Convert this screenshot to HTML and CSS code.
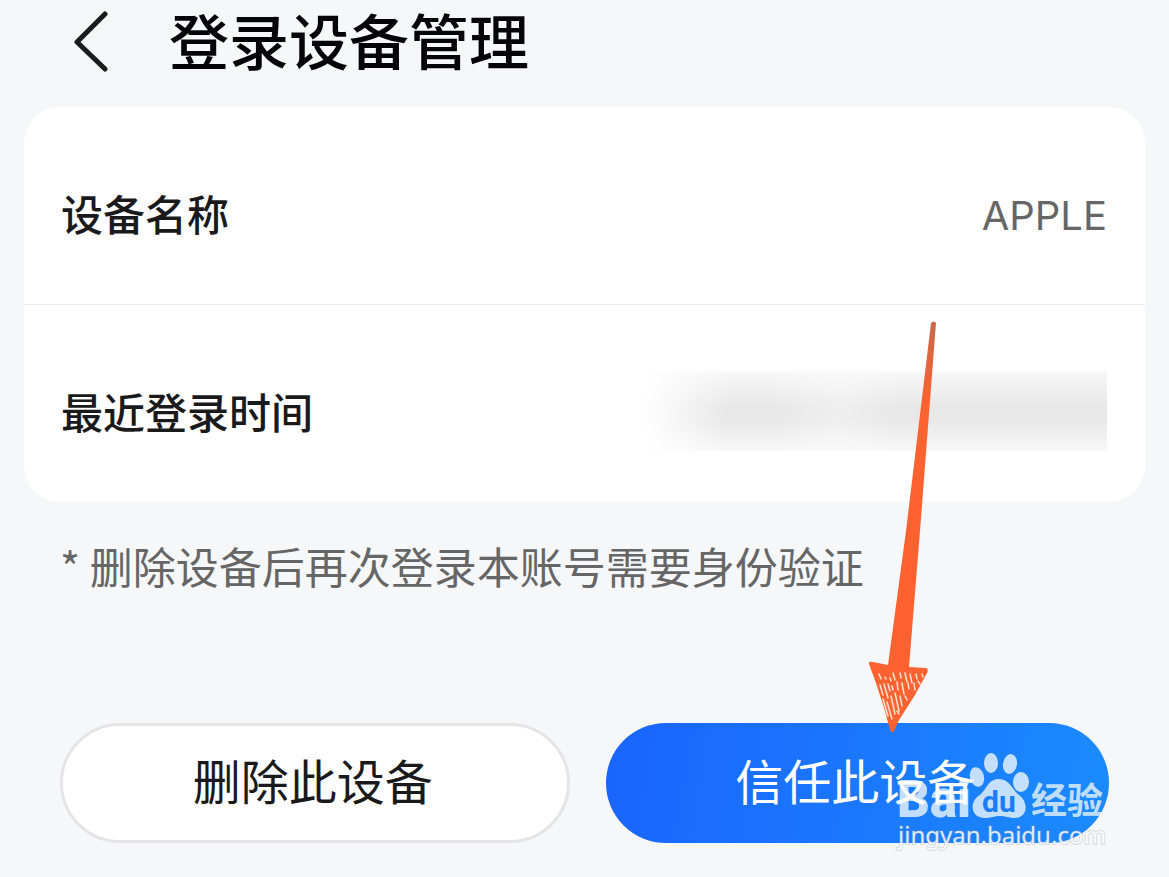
FILE: index.html
```html
<!DOCTYPE html>
<html lang="zh-CN">
<head>
<meta charset="utf-8">
<meta name="viewport" content="width=device-width, initial-scale=1">
<title>登录设备管理</title>
<link rel="stylesheet" href="styles.css">
</head>
<body>
<div class="page">
  <header class="header">
    <button class="back" type="button" aria-label="返回">
      <svg width="40" height="66" viewBox="0 0 40 66" fill="none" stroke="#1b1b1d" stroke-width="5" stroke-linecap="round" stroke-linejoin="round"><path d="M35 8 7 36 35 63"/></svg>
    </button>
    <h1 class="title">登录设备管理</h1>
  </header>
  <main>
    <dl class="card">
      <div class="row">
        <dt class="label">设备名称</dt>
        <dd class="value">APPLE</dd>
      </div>
      <div class="row">
        <dt class="label">最近登录时间</dt>
        <dd class="value masked" aria-label="已隐藏"></dd>
      </div>
    </dl>
    <p class="note">* 删除设备后再次登录本账号需要身份验证</p>
    <div class="actions">
      <button class="btn btn-plain" type="button">删除此设备</button>
      <button class="btn btn-primary" type="button">信任此设备</button>
    </div>
  </main>

  <svg class="arrow" width="72" height="416" viewBox="0 0 72 416" aria-hidden="true">
    <defs><linearGradient id="shaft" x1="0" y1="0" x2="0" y2="1"><stop offset="0" stop-color="#c8694a"/><stop offset=".2" stop-color="#fd6230"/></linearGradient></defs>
    <path d="M63 3Q66 0 68 3L52 211 41 347 58 348Q61 349 59 353L47 375 31 400 26 411Q24 414 22 410L17 391 8 363 1 344Q0 341 5 342L20 345 38 211Z" fill="url(#shaft)"/>
    <g stroke="#fde3d2" stroke-width="1.500" stroke-linecap="round" fill="none">
      <path d="M11 354l2 5M17 357l1 2M22 358l1 3M25 353l2 7M32 353l1 5M37 353l2 9M42 354l2 9M48 354l1 5M54 354l1 3"/>
      <path d="M12 365l3 10M16 364l4 14M20 364l2 7M24 366l1 4M29 362l1 8M34 363l2 11M40 363l1 6M46 363l1 7M50 361l2 3"/>
      <path d="M15 379l4 14M19 382l5 17M23 376l4 18M27 373l4 18M32 376l2 10M37 376l2 4M29 391l2 3M18 389l2 7"/>
    </g>
  </svg>

  <svg class="watermark" width="220" height="106" viewBox="0 0 220 106" role="img" aria-label="Baidu 经验">
    <g fill="#fff" fill-opacity=".74">
      <text class="wm-logo" x="4" y="67">Bai</text>
      <ellipse cx="84" cy="27" rx="7" ry="10" transform="rotate(-14 84 27)"/>
      <ellipse cx="98" cy="13" rx="7" ry="10"/>
      <ellipse cx="117" cy="14" rx="7" ry="10" transform="rotate(10 117 14)"/>
      <ellipse cx="128" cy="32" rx="8" ry="10"/>
      <path d="M106 29C95 29 94 39 87 45 76 51 77 68 92 68 98 68 101 66 107 66 113 66 116 68 122 68 136 67 135 51 126 45 119 40 117 29 106 29Z"/>
      <text class="wm-cjk" x="138" y="64">经验</text>
    </g>
    <text class="wm-du" x="89" y="62">du</text>
    <text class="wm-url" x="5" y="94">jingyan.baidu.com</text>
  </svg>
</div>
</body>
</html>
```
FILE: styles.css
```css
* { box-sizing: border-box; }

body {
  margin: 0;
  background: #f5f7f9;
  color: #1a1a1c;
  font-family: "Noto Sans CJK SC", sans-serif;
}

.page {
  position: relative;
  min-height: 100vh;
}

.header {
  display: flex;
  align-items: center;
  gap: 59px;
  height: 107px;
  padding: 0 70px 30px;
}

.back {
  display: flex;
  padding: 0;
  border: 0;
  background: none;
}

.title {
  margin: 0;
  color: #050507;
  font-size: 60px;
  font-weight: 500;
  line-height: 76px;
}

.card {
  margin: 0 24px;
  border-radius: 36px;
  background: #fff;
}

.row {
  display: flex;
  align-items: center;
  justify-content: space-between;
  min-height: 197px;
  padding: 14px 38px 0 37px;
}

.row + .row {
  min-height: 198px;
  border-top: 1px solid #ebebed;
}

.label {
  font-size: 42px;
  font-weight: 500;
  line-height: 60px;
}

.value {
  margin: 0;
  padding-top: 6px;
  color: #666;
  font-family: Inter, "Noto Sans CJK SC", sans-serif;
  font-size: 40px;
  line-height: 56px;
}

.masked {
  width: 464px;
  height: 80px;
  background: linear-gradient(#f8f8f8, #e8e8e9 45%, #e8e8e9 60%, #f8f8f8);
  -webkit-mask-image: linear-gradient(90deg, transparent, #000 18%, #000 28%, rgba(0, 0, 0, 0.7) 42%, #000 55%);
  mask-image: linear-gradient(90deg, transparent, #000 18%, #000 28%, rgba(0, 0, 0, 0.7) 42%, #000 55%);
}

.note {
  margin: 33px 60px 0;
  color: #666;
  font-size: 43px;
  line-height: 60px;
}

.actions {
  display: flex;
  gap: 36px;
  padding: 128px 60px 0;
}

.btn {
  flex: 1;
  height: 120px;
  padding: 0 4px 8px 0;
  border: 0;
  border-radius: 60px;
  font-family: inherit;
  font-size: 48px;
  line-height: 72px;
}

.btn-plain {
  border: 3px solid #e5e5e7;
  background: #fff;
  color: #1a1a1c;
}

.btn-primary {
  background: linear-gradient(100deg, #1a64ff, #1b8bff);
  color: #fff;
}

/* Pointer drawn over the card and the primary button */
.arrow {
  position: absolute;
  top: 320px;
  right: 229px;
}

.watermark {
  position: absolute;
  top: 750px;
  right: 56px;
}

.wm-logo {
  font: 900 51px Roboto, sans-serif;
}

.wm-cjk {
  font: 700 36px "Noto Sans CJK SC", sans-serif;
}

.wm-du {
  fill: #1b7dfc;
  font: 700 30px Roboto, sans-serif;
}

.wm-url {
  fill: #fff;
  fill-opacity: 0.85;
  stroke: #8b9bb5;
  stroke-opacity: 0.3;
  stroke-width: 2px;
  paint-order: stroke;
  font: 400 24px "Noto Sans", sans-serif;
}
```
